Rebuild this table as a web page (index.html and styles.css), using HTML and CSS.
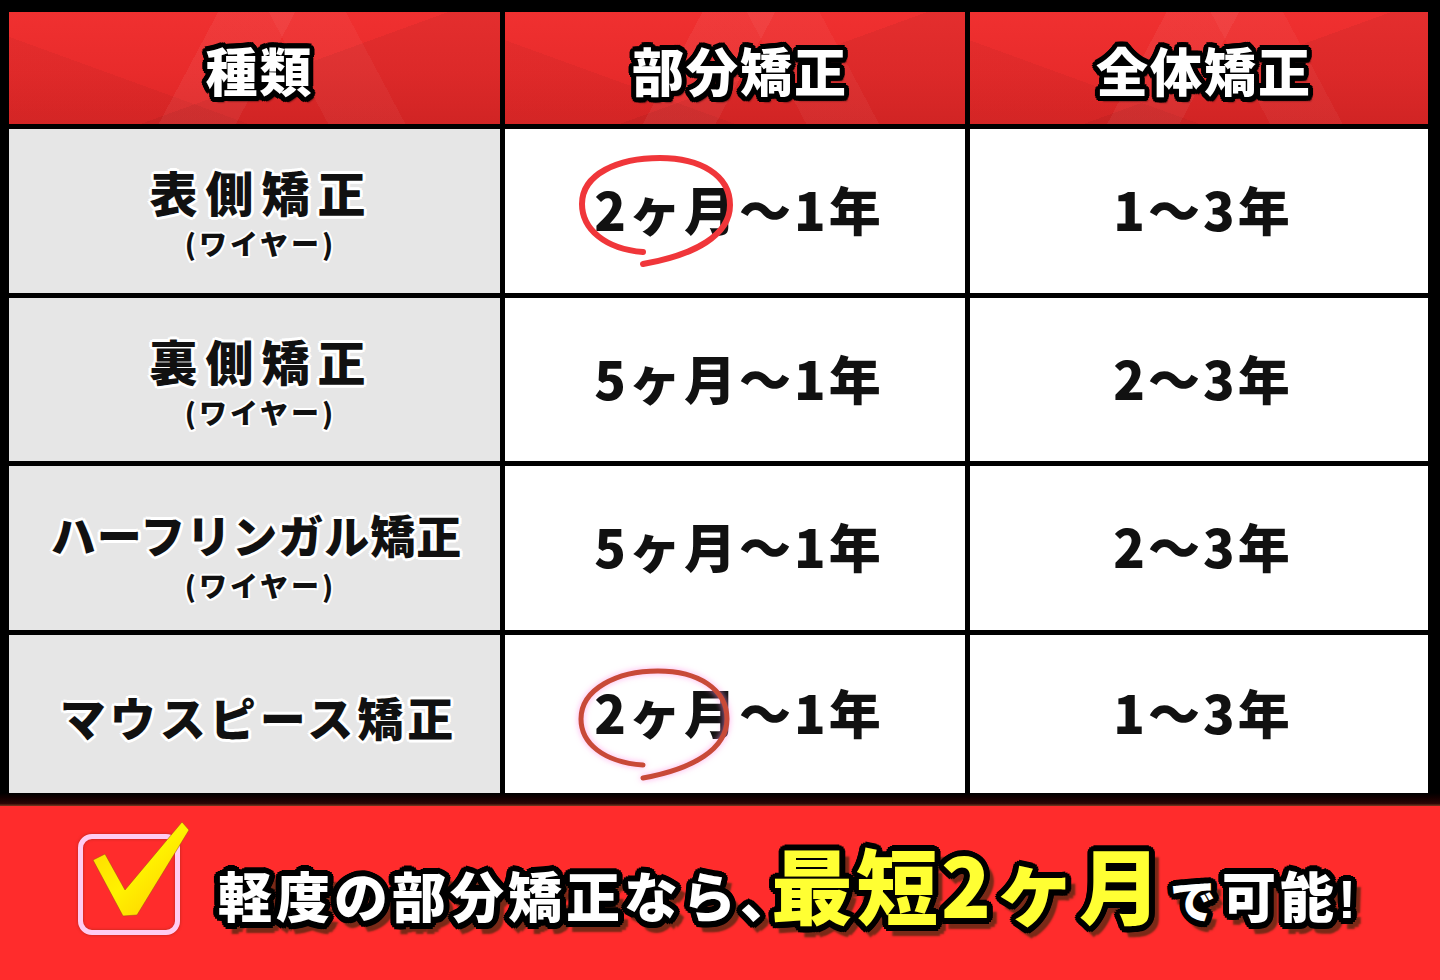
FILE: index.html
```html
<!DOCTYPE html>
<html lang="ja">
<head>
<meta charset="utf-8">
<title>矯正期間比較</title>
<link rel="stylesheet" href="styles.css">
</head>
<body>
<div class="page">
  <div class="table">
    <div class="head"><span class="head-text">種類</span></div>
    <div class="head"><span class="head-text">部分矯正</span></div>
    <div class="head"><span class="head-text">全体矯正</span></div>

    <div class="label">
      <span class="label-main sp1">表側矯正</span>
      <span class="label-sub">(ワイヤー)</span>
    </div>
    <div class="val circled">
      <svg class="circle" width="300" height="164" viewBox="0 0 300 164"><path d="M138,123 C100,120 77,100 77,75 C77,45 113,29 155,29 C195,29 225,46 225,76 C225,106 190,126 138,135" fill="none" stroke="#f0363a" stroke-width="6" stroke-linecap="round"/></svg>
      <span class="val-text">2ヶ月〜1年</span>
    </div>
    <div class="val"><span class="val-text">1〜3年</span></div>

    <div class="label">
      <span class="label-main sp1">裏側矯正</span>
      <span class="label-sub">(ワイヤー)</span>
    </div>
    <div class="val"><span class="val-text">5ヶ月〜1年</span></div>
    <div class="val"><span class="val-text">2〜3年</span></div>

    <div class="label">
      <span class="label-main sp3">ハーフリンガル矯正</span>
      <span class="label-sub">(ワイヤー)</span>
    </div>
    <div class="val"><span class="val-text">5ヶ月〜1年</span></div>
    <div class="val"><span class="val-text">2〜3年</span></div>

    <div class="label">
      <span class="label-main sp4">マウスピース矯正</span>
    </div>
    <div class="val circled">
      <svg class="circle circle2" width="300" height="158" viewBox="0 0 300 158"><path d="M138,130 C98,127 76,108 76,84 C76,54 112,36 153,36 C193,36 222,54 222,84 C222,114 188,134 138,143" fill="none" stroke="#c84a38" stroke-width="5" stroke-linecap="round"/></svg>
      <span class="val-text">2ヶ月〜1年</span>
    </div>
    <div class="val"><span class="val-text">1〜3年</span></div>
  </div>

  <div class="divider"></div>

  <div class="banner">
    <div class="check">
      <div class="check-box"></div>
      <svg class="check-mark" width="110" height="110" viewBox="0 0 110 110">
        <defs>
          <linearGradient id="cg" x1="0" y1="0" x2="1" y2="1">
            <stop offset="0" stop-color="#ffd400"/>
            <stop offset="0.5" stop-color="#fff200"/>
            <stop offset="1" stop-color="#ffc400"/>
          </linearGradient>
        </defs>
        <polygon points="12,40 24,34 44,70 101,2 108,10 56,95 42,96" fill="url(#cg)" stroke="#a04018" stroke-width="1" stroke-opacity="0.5"/>
      </svg>
    </div>
    <p class="banner-text"><span class="w">軽度の部分矯正なら</span><span class="w comma">、</span><span class="y">最短2ヶ月</span><span class="w de">で</span><span class="w">可能</span><span class="w excl">!</span></p>
  </div>
</div>
</body>
</html>
```

FILE: styles.css
```css
* { box-sizing: border-box; }
html, body { margin: 0; padding: 0; }
body {
  background: #000;
  width: 1440px;
  height: 980px;
  overflow: hidden;
  font-family: "Noto Sans CJK JP", "Noto Sans", sans-serif;
}
.page {
  display: flex;
  flex-direction: column;
  height: 980px;
}
.table {
  display: grid;
  grid-template-columns: 491px 460px 458px;
  grid-template-rows: 112px 164px 163px 164px 158px;
  gap: 5px;
  padding: 12px 12px 0 9px;
}
.head {
  display: flex;
  align-items: center;
  justify-content: center;
  background:
    linear-gradient(118deg, rgba(255,255,255,0) 0 38%, rgba(255,255,255,0.05) 38% 52%, rgba(255,255,255,0) 52%),
    linear-gradient(62deg, rgba(0,0,0,0) 0 58%, rgba(255,255,255,0.04) 58% 72%, rgba(0,0,0,0) 72%),
    linear-gradient(160deg, rgba(0,0,0,0) 0 55%, rgba(0,0,0,0.05) 55%),
    linear-gradient(20deg, rgba(0,0,0,0.04) 0 30%, rgba(0,0,0,0) 30%),
    linear-gradient(180deg, #f03030 0%, #e82b2b 55%, #dc2626 100%);
}
.head-text {
  color: #fff;
  font-size: 52px;
  font-weight: 900;
  letter-spacing: 2px;
  padding-left: 10px;
  line-height: 1;
  margin-top: 4px;
  text-shadow:
    5px 0 0 #000, -5px 0 0 #000, 0 5px 0 #000, 0 -5px 0 #000,
    3.5px 3.5px 0 #000, -3.5px 3.5px 0 #000, 3.5px -3.5px 0 #000, -3.5px -3.5px 0 #000,
    4.6px 1.9px 0 #000, -4.6px 1.9px 0 #000, 4.6px -1.9px 0 #000, -4.6px -1.9px 0 #000,
    1.9px 4.6px 0 #000, -1.9px 4.6px 0 #000, 1.9px -4.6px 0 #000, -1.9px -4.6px 0 #000,
    3px 5px 2px #000;
}
.label {
  background: #e6e6e6;
  display: flex;
  flex-direction: column;
  align-items: center;
  justify-content: center;
  color: #111;
}
.label-main {
  font-size: 48px;
  font-weight: 900;
  line-height: 1;
  text-shadow:
    3px 0 0 #fff, -3px 0 0 #fff, 0 3px 0 #fff, 0 -3px 0 #fff,
    2.1px 2.1px 0 #fff, -2.1px 2.1px 0 #fff, 2.1px -2.1px 0 #fff, -2.1px -2.1px 0 #fff;
}
.sp1 { letter-spacing: 8px; padding-left: 14px; margin-top: 2px; }
.sp3 { font-size: 45px; letter-spacing: 1px; padding-left: 4px; margin-top: 14px; }
.sp4 { font-size: 46px; letter-spacing: 4px; padding-left: 8px; margin-top: 4px; }
.label-sub {
  font-size: 28px;
  font-weight: 900;
  letter-spacing: 3px;
  padding-left: 12px;
  line-height: 1;
  margin-top: 14px;
  text-shadow:
    2px 0 0 #fff, -2px 0 0 #fff, 0 2px 0 #fff, 0 -2px 0 #fff,
    1.5px 1.5px 0 #fff, -1.5px 1.5px 0 #fff, 1.5px -1.5px 0 #fff, -1.5px -1.5px 0 #fff;
}
.val {
  background: #fff;
  display: flex;
  align-items: center;
  justify-content: center;
  position: relative;
}
.val-text {
  font-size: 52px;
  font-weight: 900;
  color: #111;
  letter-spacing: 3px;
  padding-left: 8px;
  line-height: 1;
  position: relative;
  z-index: 1;
  margin-top: -4px;
}
.circle {
  position: absolute;
  left: 0;
  top: 0;
  z-index: 2;
}
.circle2 {
  filter: drop-shadow(0 0 3px rgba(255, 150, 230, 0.8));
}
.divider {
  height: 13px;
  background: linear-gradient(180deg, #000 0%, #140000 40%, #2a0505 80%, #7a3a20 100%);
}
.banner {
  flex: 1;
  background: #ff2c2c;
  display: flex;
  align-items: center;
  padding-left: 78px;
  padding-bottom: 18px;
}
.check {
  position: relative;
  width: 102px;
  height: 101px;
}
.check-box {
  width: 102px;
  height: 101px;
  border: 5px solid #ffccf2;
  border-radius: 14px;
  box-shadow: inset 0 0 3px rgba(120, 40, 20, 0.6), 0 0 3px rgba(120, 40, 20, 0.6);
}
.check-mark {
  position: absolute;
  left: 3px;
  top: -14px;
}
.banner-text {
  margin: 0 0 0 38px;
  display: flex;
  align-items: baseline;
  line-height: 1;
  font-weight: 900;
}
.w, .y {
  text-shadow:
    6px 0 0 #000, -6px 0 0 #000, 0 6px 0 #000, 0 -6px 0 #000,
    4.2px 4.2px 0 #000, -4.2px 4.2px 0 #000, 4.2px -4.2px 0 #000, -4.2px -4.2px 0 #000,
    5.5px 2.3px 0 #000, -5.5px 2.3px 0 #000, 5.5px -2.3px 0 #000, -5.5px -2.3px 0 #000,
    2.3px 5.5px 0 #000, -2.3px 5.5px 0 #000, 2.3px -5.5px 0 #000, -2.3px -5.5px 0 #000,
    8px 9px 2px #7a2a18, 10px 6px 2px #7a2a18, 4px 11px 2px #7a2a18;
}
.w {
  color: #fff;
  font-size: 54px;
  letter-spacing: 4px;
}
.comma { font-feature-settings: "halt" 1; letter-spacing: 0; margin-right: 2px; }
.de { font-size: 46px; letter-spacing: 0; margin-left: 6px; margin-right: 6px; }
.excl { font-family: "Liberation Sans", sans-serif; letter-spacing: 0; margin-left: 0; }
.y {
  color: #ffff33;
  font-size: 82px;
  letter-spacing: 3px;
  margin: 0 0 0 2px;
}
```
